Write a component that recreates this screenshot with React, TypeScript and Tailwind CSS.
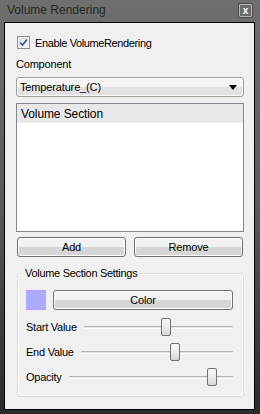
import React from 'react'

const font = { fontFamily: '"Liberation Sans", Arial, sans-serif' }

type SliderProps = { label: string; value: number }

const Slider = ({ label, value }: SliderProps) => (
  <div className="flex h-[18px] items-center gap-[7px]">
    <span className="text-[11px] leading-[14px] tracking-[-0.25px] text-black whitespace-nowrap">{label}</span>
    <div className="relative h-[18px] flex-1">
      <div className="absolute left-0 right-0 top-[8px] h-[3px] rounded-[1px] border-t border-[#b4b4b4] bg-[#e6e6e6] border-b border-b-[#ffffff]" />
      <div
        className="absolute top-0 h-[18px] w-[10px] rounded-[2px] border border-[#707070] bg-gradient-to-b from-[#f7f7f7] via-[#ececec] to-[#d5d5d5]"
        style={{ left: `calc((100% - 10px) * ${value})` }}
      />
    </div>
  </div>
)

const Button = ({ children, className }: { children: React.ReactNode; className?: string }) => (
  <div
    className={
      'flex h-[20px] items-center justify-center rounded-[3px] border border-[#707070] bg-gradient-to-b from-[#f2f2f2] from-50% to-[#d6d6d6] to-50% text-[11px] tracking-[-0.2px] text-black shadow-[inset_0_0_0_1px_#fcfcfc] ' +
      (className ?? '')
    }
  >
    {children}
  </div>
)

export default function App() {
  return (
    <div
      className="flex h-[414px] w-[260px] flex-col bg-gradient-to-b from-[#6f6f6f] via-[#5a5a5a] to-[#2a2a2a]"
      style={font}
    >
      {/* title bar */}
      <div className="flex h-[22px] items-start justify-between pl-[7px] pr-[8px]">
        <span className="mt-[3px] text-[12px] leading-[15px] text-neutral-800">Volume Rendering</span>
        <div className="mt-[4px] flex h-[13px] w-[13px] items-center justify-center rounded-[1px] border border-[#b9b9b9] bg-[#6a6a6a] shadow-[0_0_0_1px_#4a4a4a]">
          <span className="text-[10px] font-bold leading-[10px] text-white">x</span>
        </div>
      </div>

      {/* panel */}
      <div className="ml-[4px] flex h-[388px] w-[251px] flex-col border border-black bg-[#f0f0f0] pl-[11px] pr-[10px] text-[11px] tracking-[-0.25px] text-black">
        <div className="mt-[13px] flex h-[13px] items-center">
          <div className="ml-[1px] flex h-[13px] w-[13px] items-center justify-center border border-[#8e8f8f] bg-gradient-to-br from-[#dcdcdc] to-[#f6f6f6] shadow-[inset_0_0_0_1px_#f4f4f4]">
            <svg width="9" height="9" viewBox="0 0 9 9">
              <path d="M1 4.5 L3.5 7 L8 1.5" fill="none" stroke="#3b4f9a" strokeWidth="1.6" />
            </svg>
          </div>
          <span className="ml-[5px] leading-[14px] tracking-[-0.38px]">Enable VolumeRendering</span>
        </div>

        <div className="mt-[8px] h-[14px] leading-[14px] tracking-[-0.2px]">Component</div>

        <div className="mt-[6px] flex h-[20px] items-center justify-between rounded-[3px] border border-[#a0a0a0] bg-gradient-to-b from-[#f4f4f4] from-50% to-[#e2e2e2] to-50% pl-[3px] pr-[6px] shadow-[inset_0_0_0_1px_#fafafa]">
          <span className="tracking-[-0.15px]">Temperature_(C)</span>
          <svg width="8" height="5" viewBox="0 0 8 5">
            <path d="M0 0 H8 L4 5 Z" fill="#000" />
          </svg>
        </div>

        <div className="mt-[6px] h-[129px] border border-[#828790] bg-white">
          <div className="flex h-[19px] items-center bg-[#e8e8e8] pl-[4px] text-[12px] tracking-[-0.1px]">Volume Section</div>
        </div>

        <div className="mt-[5px] flex gap-[8px] pl-[1px] pr-[1px]">
          <Button className="w-[109px]">Add</Button>
          <Button className="w-[109px]">Remove</Button>
        </div>

        <div className="relative ml-[1px] mt-[16px] h-[124px] rounded-[3px] border border-[#d5dfe5] pl-[8px] pr-[10px] pt-[16px] shadow-[inset_0_0_0_1px_#ffffff]">
          <span className="absolute -top-[8px] left-[5px] bg-[#f0f0f0] px-[2px] leading-[14px] tracking-[-0.3px]">
            Volume Section Settings
          </span>
          <div className="flex items-center gap-[7px]">
            <div className="h-[20px] w-[20px] bg-[#aaaaff]" />
            <Button className="flex-1">Color</Button>
          </div>
          <div className="mt-[8px] flex flex-col gap-[7px]">
            <Slider label="Start Value" value={0.554} />
            <Slider label="End Value" value={0.628} />
            <Slider label="Opacity" value={0.896} />
          </div>
        </div>
      </div>
    </div>
  )
}
